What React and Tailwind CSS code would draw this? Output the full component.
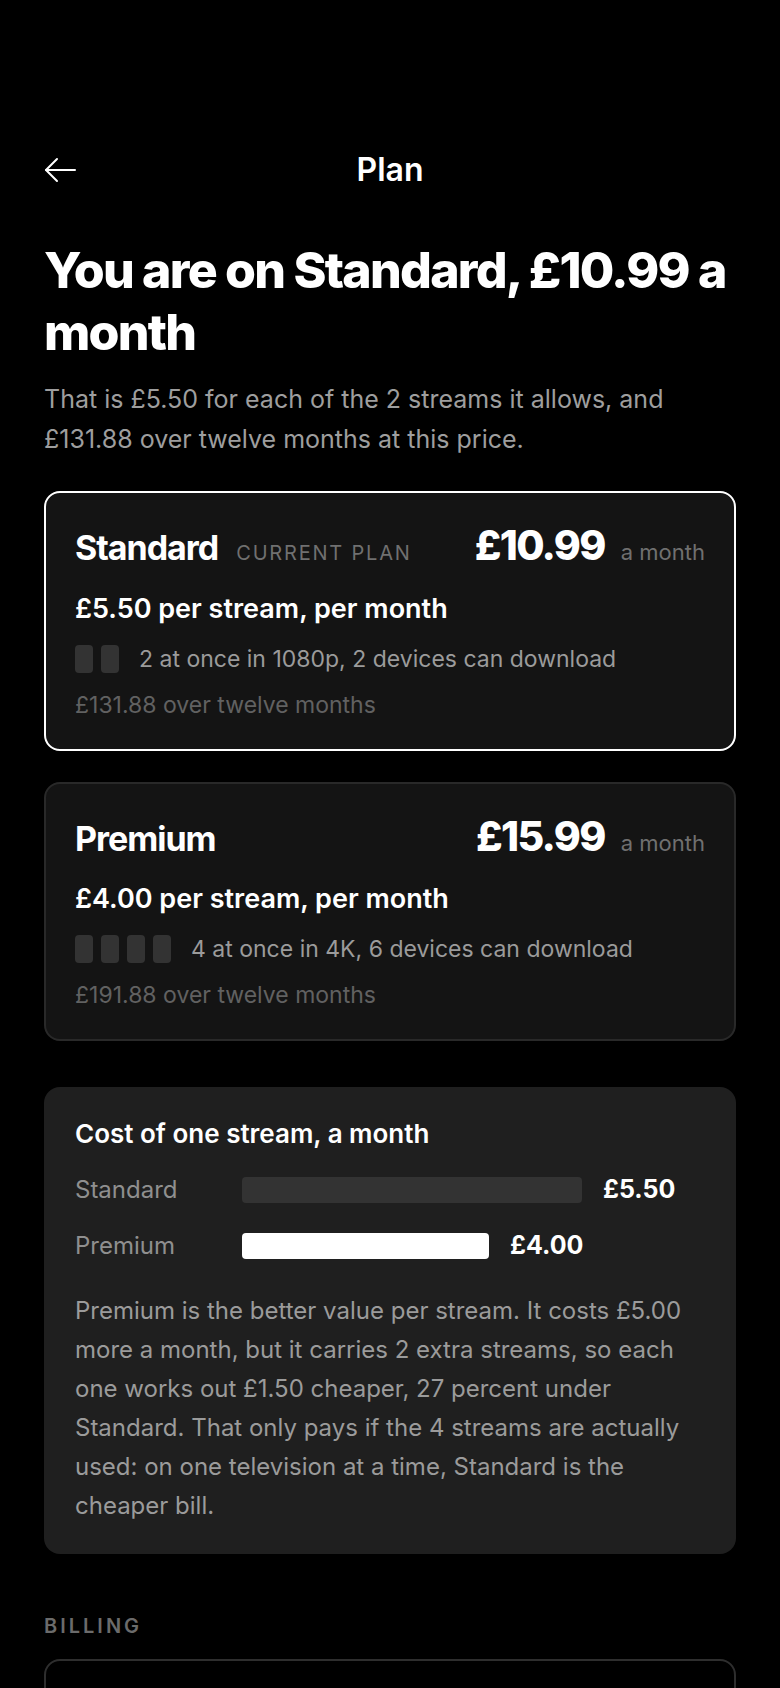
import React from 'react';

const plans = [
  {
    name: 'Standard',
    current: true,
    price: '£10.99',
    perStream: '£5.50 per stream, per month',
    streams: 2,
    devices: '2 at once in 1080p, 2 devices can download',
    yearly: '£131.88 over twelve months',
  },
  {
    name: 'Premium',
    current: false,
    price: '£15.99',
    perStream: '£4.00 per stream, per month',
    streams: 4,
    devices: '4 at once in 4K, 6 devices can download',
    yearly: '£191.88 over twelve months',
  },
];

const costRows = [
  { label: 'Standard', value: 5.5, text: '£5.50', fill: 'bg-[#333333]' },
  { label: 'Premium', value: 4.0, text: '£4.00', fill: 'bg-white' },
];

function BackArrow() {
  return (
    <svg width="32" height="26" viewBox="0 0 32 26" fill="none" stroke="white" strokeWidth="2" strokeLinecap="round" strokeLinejoin="round">
      <path d="M31 13H2" />
      <path d="M13 2L2 13L13 24" />
    </svg>
  );
}

function PlanCard({ plan }) {
  return (
    <div
      className={`rounded-2xl border-2 bg-[#141414] px-[29px] pt-[30px] pb-[30px] ${
        plan.current ? 'border-white' : 'border-[#292929]'
      }`}
    >
      {/* title + price */}
      <div className="flex items-baseline leading-[44px]">
        <span className="text-[34px] font-bold tracking-[-0.03em] text-white">{plan.name}</span>
        {plan.current && (
          <span className="ml-[18px] text-[20px] tracking-[0.09em] text-[#707070]">CURRENT PLAN</span>
        )}
        <span className="ml-auto text-[41px] font-extrabold tracking-[-0.04em] text-white">{plan.price}</span>
        <span className="ml-4 text-[22px] text-[#707070]">a month</span>
      </div>

      <div className="mt-[17px] text-[27px] font-semibold leading-[34px] text-white">{plan.perStream}</div>

      <div className="mt-[19px] flex h-[28px] items-center">
        <div className="flex gap-2">
          {Array.from({ length: plan.streams }).map((_, i) => (
            <div key={i} className="h-[28px] w-[18px] rounded-[4px] bg-[#333333]" />
          ))}
        </div>
        <span className="ml-5 text-[23px] leading-[28px] text-[#9b9b9b]">{plan.devices}</span>
      </div>

      <div className="mt-[18px] text-[23px] leading-[28px] text-[#616161]">{plan.yearly}</div>
    </div>
  );
}

export default function App() {
  const maxBar = 340;
  const maxValue = Math.max(...costRows.map((r) => r.value));

  return (
    <div className="min-h-[1688px] bg-black px-11 pt-[146px] font-['Inter','Noto_Sans',sans-serif] antialiased">
      {/* header */}
      <div className="grid h-12 grid-cols-[1fr_auto_1fr] items-center">
        <div className="flex items-center">
          <BackArrow />
        </div>
        <div className="text-[32px] font-semibold text-white">Plan</div>
        <div />
      </div>

      <h1 className="mt-[45px] text-[50px] font-extrabold leading-[62px] tracking-[-0.035em] text-white">
        You are on Standard, £10.99 a month
      </h1>
      <p className="mt-[16px] text-[25px] leading-[40px] text-[#9e9e9e]">
        That is £5.50 for each of the 2 streams it allows, and £131.88 over twelve months at this price.
      </p>

      <div className="mt-[32px] flex flex-col gap-[31px]">
        {plans.map((p) => (
          <PlanCard key={p.name} plan={p} />
        ))}
      </div>

      {/* cost comparison */}
      <div className="mt-[46px] rounded-2xl bg-[#1f1f1f] px-[31px] pt-[31px] pb-[29px]">
        <div className="text-[26px] font-semibold leading-[32px] text-white">Cost of one stream, a month</div>
        <div className="mt-[24px] flex flex-col gap-[24px]">
          {costRows.map((r) => (
            <div key={r.label} className="flex h-[32px] items-center">
              <span className="w-[167px] text-[24px] text-[#8f8f8f]">{r.label}</span>
              <div
                className={`h-[26px] rounded-[4px] ${r.fill}`}
                style={{ width: Math.round((maxBar * r.value) / maxValue) }}
              />
              <span className="ml-[21px] text-[25px] font-bold text-white">{r.text}</span>
            </div>
          ))}
        </div>
        <p className="mt-[29px] text-[24px] leading-[39px] text-[#9b9b9b]">
          Premium is the better value per stream. It costs £5.00 more a month, but it carries 2 extra streams, so
          each one works out £1.50 cheaper, 27 percent under Standard. That only pays if the 4 streams are actually
          used: on one television at a time, Standard is the cheaper bill.
        </p>
      </div>

      {/* billing */}
      <div className="mt-[60px] text-[20px] font-semibold leading-[24px] tracking-[0.15em] text-[#6b6b6b]">BILLING</div>
      <div className="mt-[21px] h-[220px] rounded-2xl border-2 border-[#2e2e2e] bg-black" />
    </div>
  );
}
